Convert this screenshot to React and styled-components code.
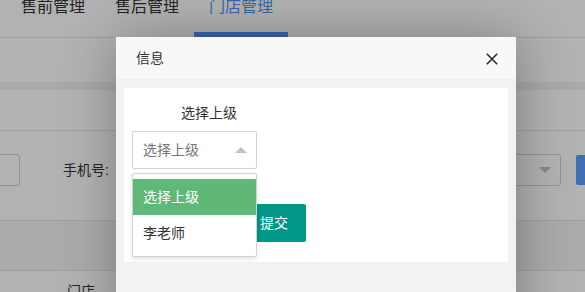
import React from "react";
import styled, { createGlobalStyle } from "styled-components";

const GlobalStyle = createGlobalStyle`
  html, body {
    margin: 0;
    padding: 0;
    overflow: hidden;
    background: #fff;
  }
  body {
    font-family: "Liberation Sans", "Noto Sans CJK SC", sans-serif;
    font-size: 14px;
    color: #333;
  }
`;

const Screen = styled.div`
  position: relative;
  width: 585px;
  height: 292px;
  overflow: hidden;
  background: #fff;
`;

/* ---------- page behind the layer ---------- */

const Nav = styled.nav`
  display: flex;
  margin-top: -18px;
  padding-left: 6px;
  border-bottom: 1px solid #e6e6e6;
`;

const Tab = styled.div`
  width: 94px;
  height: 55px;
  box-sizing: border-box;
  text-align: center;
  line-height: 50px;
  font-size: 16px;
  color: ${({ $active }) => ($active ? "#5396ec" : "#333")};
  border-bottom: 5px solid
    ${({ $active }) => ($active ? "#5396ec" : "transparent")};
`;

const Crumb = styled.div`
  height: 44px;
`;

const Band = styled.div`
  height: 8px;
  background: #f2f2f2;
`;

const Card = styled.section`
  background: #fff;
  overflow: hidden;
`;

const CardHead = styled.div`
  height: 40px;
  border-bottom: 1px solid #e6e6e6;
`;

const FilterRow = styled.div`
  display: flex;
  align-items: flex-start;
  height: 90px;
  box-sizing: border-box;
  padding-top: 23px;
  border-bottom: 1px solid #e6e6e6;
`;

const Field = styled.div`
  flex-shrink: 0;
  position: relative;
  width: ${({ $w }) => $w}px;
  margin-left: ${({ $ml }) => $ml || 0}px;
  height: 32px;
  box-sizing: border-box;
  border: 1px solid #d2d2d2;
  border-radius: 3px;
  background: #fff;
`;

const DownCaret = styled.i`
  position: absolute;
  right: 9px;
  top: 12px;
  width: 0;
  height: 0;
  border-style: solid;
  border-width: 6px 6px 0;
  border-color: #c2c2c2 transparent transparent;
`;

const FilterLabel = styled.label`
  flex-shrink: 0;
  margin-left: 43px;
  line-height: 32px;
  font-size: 14px;
  color: #333;
`;

const SearchBtn = styled.div`
  flex-shrink: 0;
  margin-left: 15px;
  margin-top: 1px;
  width: 70px;
  height: 30px;
  border-radius: 2px;
  background: #5a9fff;
`;

const TableHead = styled.div`
  height: 49px;
  background: #f5f5f5;
  border-bottom: 1px solid #e6e6e6;
`;

const TableRow = styled.div`
  display: flex;
  padding-top: 10px;
  line-height: 20px;
  font-size: 14px;
  color: #333;
`;

const Cell = styled.div`
  flex-shrink: 0;
  width: ${({ $w }) => $w}px;
  padding-left: ${({ $pl }) => $pl || 0}px;
`;

/* ---------- layer ---------- */

const Shade = styled.div`
  position: absolute;
  inset: 0;
  background: rgba(0, 0, 0, 0.3);
`;

const Layer = styled.div`
  position: absolute;
  left: 116px;
  top: 37px;
  width: 400px;
  background: #fff;
  box-shadow: 1px 1px 50px rgba(0, 0, 0, 0.3);
`;

const LayerTitle = styled.div`
  position: relative;
  height: 42px;
  line-height: 42px;
  padding-left: 20px;
  background: #f8f8f8;
  border-bottom: 1px solid #eee;
  font-size: 14px;
  color: #333;
`;

const CloseBtn = styled.span`
  position: absolute;
  right: 18px;
  top: 16px;
  width: 12px;
  height: 12px;
  display: block;
  line-height: 0;
`;

const LayerBody = styled.div`
  height: 260px;
  box-sizing: border-box;
  padding: 8px;
  background: #f2f2f2;
`;

const Panel = styled.div`
  background: #fff;
  padding: 8px 8px 20px;
`;

const FormLabel = styled.div`
  height: 35px;
  box-sizing: border-box;
  padding: 7px 0 0 49px;
  line-height: 20px;
  font-size: 14px;
  color: #333;
`;

const Select = styled.div`
  position: relative;
  width: 125px;
  height: 38px;
  margin-bottom: 35px;
  box-sizing: border-box;
  border: 1px solid #d2d2d2;
  border-radius: 2px;
  background: #fff;
  padding-left: 10px;
  line-height: 36px;
  font-size: 14px;
  color: #757575;
`;

const UpCaret = styled.i`
  position: absolute;
  right: 9px;
  top: 15px;
  width: 0;
  height: 0;
  border-style: solid;
  border-width: 0 6px 6px;
  border-color: transparent transparent #c2c2c2;
`;

const Options = styled.dl`
  position: absolute;
  left: -1px;
  top: 41px;
  z-index: 5;
  width: 125px;
  margin: 0;
  padding: 5px 0;
  box-sizing: border-box;
  background: #fff;
  border: 1px solid #d2d2d2;
  border-radius: 2px;
  box-shadow: 0 2px 4px rgba(0, 0, 0, 0.12);
`;

const Option = styled.dd`
  margin: 0;
  padding: 0 10px;
  line-height: 36px;
  font-size: 14px;
  color: ${({ $selected }) => ($selected ? "#fff" : "#333")};
  background: ${({ $selected }) => ($selected ? "#5fb878" : "#fff")};
`;

const SubmitBtn = styled.button`
  display: block;
  margin-left: 110px;
  height: 38px;
  padding: 0 18px;
  border: none;
  border-radius: 2px;
  background: #009688;
  color: #fff;
  font-family: inherit;
  font-size: 14px;
  line-height: 38px;
`;

const tabs = ["售前管理", "售后管理", "门店管理"];

export default function App() {
  return (
    <Screen>
      <GlobalStyle />

      <Nav>
        {tabs.map((t) => (
          <Tab key={t} $active={t === "门店管理"}>
            {t}
          </Tab>
        ))}
      </Nav>
      <Crumb />
      <Band />
      <Card>
        <CardHead />
        <FilterRow>
          <Field $w={200} $ml={-180} />
          <FilterLabel>手机号:</FilterLabel>
          <Field $w={200} $ml={10} />
          <Field $w={222} $ml={20}>
            <DownCaret />
          </Field>
          <SearchBtn />
        </FilterRow>
        <TableHead />
        <TableRow>
          <Cell $w={570} $pl={67}>门店</Cell>
          <Cell $w={60}>上级</Cell>
        </TableRow>
      </Card>

      <Shade />

      <Layer>
        <LayerTitle>
          信息
          <CloseBtn>
            <svg width="12" height="12" viewBox="0 0 12 12">
              <path
                d="M0.8 0.8 L11.2 11.2 M11.2 0.8 L0.8 11.2"
                stroke="#2b2b2b"
                strokeWidth="1.6"
                fill="none"
              />
            </svg>
          </CloseBtn>
        </LayerTitle>
        <LayerBody>
          <Panel>
            <FormLabel>选择上级</FormLabel>
            <Select>
              选择上级
              <UpCaret />
              <Options>
                <Option $selected>选择上级</Option>
                <Option>李老师</Option>
              </Options>
            </Select>
            <SubmitBtn>提交</SubmitBtn>
          </Panel>
        </LayerBody>
      </Layer>
    </Screen>
  );
}
